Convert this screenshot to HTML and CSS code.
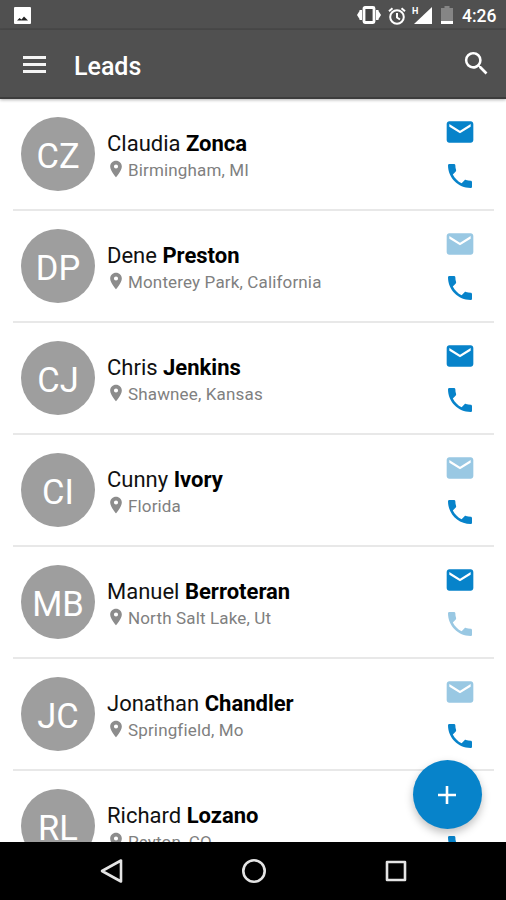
FILE: index.html
```html
<!DOCTYPE html>
<html lang="en">
<head>
    <meta charset="UTF-8">
    <meta name="viewport" content="width=device-width, initial-scale=1.0">
    <title>Leads</title>
    <link rel="stylesheet" href="styles.css">
</head>
<body>
    <!-- Shared icons -->
    <svg class="icon-defs">
        <symbol id="mail" viewBox="0 0 24 24"><path d="M20 4H4c-1.1 0-1.99.9-1.99 2L2 18c0 1.1.9 2 2 2h16c1.1 0 2-.9 2-2V6c0-1.1-.9-2-2-2zm0 4l-8 5-8-5V6l8 5 8-5v2z"/></symbol>
        <symbol id="phone" viewBox="0 0 24 24"><path d="M6.62 10.79c1.44 2.83 3.76 5.14 6.59 6.59l2.2-2.2c.27-.27.67-.36 1.02-.24 1.12.37 2.33.57 3.57.57.55 0 1 .45 1 1V20c0 .55-.45 1-1 1-9.39 0-17-7.61-17-17 0-.55.45-1 1-1h3.5c.55 0 1 .45 1 1 0 1.25.2 2.45.57 3.57.11.35.03.74-.25 1.02l-2.2 2.2z"/></symbol>
        <symbol id="pin" viewBox="0 0 24 24"><path d="M12 2C8.13 2 5 5.13 5 9c0 5.25 7 13 7 13s7-7.75 7-13c0-3.87-3.13-7-7-7zm0 9.5a2.5 2.5 0 0 1 0-5 2.5 2.5 0 0 1 0 5z"/></symbol>
    </svg>

    <div class="phone">
        <div class="status-bar">
            <svg class="status-image" viewBox="0 0 17 17"><rect width="17" height="17" rx="1" fill="#fff"/><path d="M3 13.500l2.500-2.500 2 1.500 2.500-3 4 4z" fill="#222"/></svg>
            <div class="status-icons">
                <svg class="status-vibrate" viewBox="0 0 24 18"><path d="M0 9l2.500-4v8zM24 9l-2.500-4v8zM2.500 4h2.500v10H2.500zM19 4h2.500v10H19z" fill="#fff"/><rect x="7" y="1.500" width="10" height="15" rx="1" fill="#444" stroke="#fff" stroke-width="2.800"/></svg>
                <svg class="status-alarm" viewBox="0 0 18 18"><circle cx="9" cy="10" r="6.800"/><path d="M9 6v4.500l3 2M1 4.200L4.500 1.200M17 4.200L13.500 1.200"/></svg>
                <div class="signal">
                    <span class="signal-type">H</span>
                    <svg viewBox="0 0 18 17"><path d="M18 0v17H0z" fill="#fff"/></svg>
                </div>
                <svg class="status-battery" viewBox="0 0 12 18"><path d="M3.500 0h5v2H12v13H0V2h3.500z" fill="#858585"/><path d="M0 15h12v3H0z" fill="#fff"/></svg>
                <span class="clock">4:26</span>
            </div>
        </div>

        <header class="app-bar">
            <div class="menu-btn"><span></span><span></span><span></span></div>
            <h1>Leads</h1>
            <svg class="search" viewBox="0 0 24 24"><path d="M15.500 14h-.79l-.28-.27A6.471 6.471 0 0 0 16 9.500 6.500 6.500 0 1 0 9.500 16c1.610 0 3.090-.59 4.230-1.570l.27.28v.79l5 4.990L20.490 19l-4.990-5zm-6 0C7.010 14 5 11.990 5 9.500S7.010 5 9.500 5 14 7.010 14 9.500 11.990 14 9.500 14z"/></svg>
        </header>

        <main class="leads">
            <div class="lead">
                <div class="avatar">CZ</div>
                <div class="info">
                    <p class="name">Claudia <b>Zonca</b></p>
                    <p class="place"><svg><use href="#pin"/></svg>Birmingham, MI</p>
                </div>
                <div class="actions">
                    <svg><use href="#mail"/></svg>
                    <svg><use href="#phone"/></svg>
                </div>
            </div>
            <div class="lead">
                <div class="avatar">DP</div>
                <div class="info">
                    <p class="name">Dene <b>Preston</b></p>
                    <p class="place"><svg><use href="#pin"/></svg>Monterey Park, California</p>
                </div>
                <div class="actions">
                    <svg class="off"><use href="#mail"/></svg>
                    <svg><use href="#phone"/></svg>
                </div>
            </div>
            <div class="lead">
                <div class="avatar">CJ</div>
                <div class="info">
                    <p class="name">Chris <b>Jenkins</b></p>
                    <p class="place"><svg><use href="#pin"/></svg>Shawnee, Kansas</p>
                </div>
                <div class="actions">
                    <svg><use href="#mail"/></svg>
                    <svg><use href="#phone"/></svg>
                </div>
            </div>
            <div class="lead">
                <div class="avatar">CI</div>
                <div class="info">
                    <p class="name">Cunny <b>Ivory</b></p>
                    <p class="place"><svg><use href="#pin"/></svg>Florida</p>
                </div>
                <div class="actions">
                    <svg class="off"><use href="#mail"/></svg>
                    <svg><use href="#phone"/></svg>
                </div>
            </div>
            <div class="lead">
                <div class="avatar">MB</div>
                <div class="info">
                    <p class="name">Manuel <b>Berroteran</b></p>
                    <p class="place"><svg><use href="#pin"/></svg>North Salt Lake, Ut</p>
                </div>
                <div class="actions">
                    <svg><use href="#mail"/></svg>
                    <svg class="off"><use href="#phone"/></svg>
                </div>
            </div>
            <div class="lead">
                <div class="avatar">JC</div>
                <div class="info">
                    <p class="name">Jonathan <b>Chandler</b></p>
                    <p class="place"><svg><use href="#pin"/></svg>Springfield, Mo</p>
                </div>
                <div class="actions">
                    <svg class="off"><use href="#mail"/></svg>
                    <svg><use href="#phone"/></svg>
                </div>
            </div>
            <div class="lead">
                <div class="avatar">RL</div>
                <div class="info">
                    <p class="name">Richard <b>Lozano</b></p>
                    <p class="place"><svg><use href="#pin"/></svg>Peyton, CO</p>
                </div>
                <div class="actions">
                    <svg><use href="#mail"/></svg>
                    <svg><use href="#phone"/></svg>
                </div>
            </div>
        </main>

        <button class="add-btn" aria-label="Add lead">
            <svg viewBox="0 0 18 18"><path d="M9 0v18M0 9h18"/></svg>
        </button>

        <nav class="nav-bar">
            <svg viewBox="0 0 26 26"><path d="M22 2.500v21L3 13z"/></svg>
            <svg viewBox="0 0 26 26"><circle cx="13" cy="13" r="10.700"/></svg>
            <svg viewBox="0 0 26 26"><rect x="4" y="4" width="18" height="18"/></svg>
        </nav>
    </div>
</body>
</html>
```
FILE: styles.css
```css
* {
    box-sizing: border-box;
}

body {
    margin: 0;
    font-family: Roboto, sans-serif;
    background: #fff;
    color: #111;
}

h1, p {
    margin: 0;
}

svg {
    display: block;
    flex-shrink: 0;
}

.icon-defs {
    display: none;
}

.phone {
    position: relative;
    display: flex;
    flex-direction: column;
    height: 900px;
    overflow: hidden;
}

/* Status bar */
.status-bar {
    display: flex;
    justify-content: space-between;
    align-items: flex-start;
    height: 30px;
    padding: 6px 10px 0 14px;
    background: #505050;
    border-bottom: 2px solid #4a4a4a;
    color: #fff;
    flex-shrink: 0;
}

.status-image {
    width: 17px;
    height: 17px;
    margin-top: 1px;
}

.status-icons {
    display: flex;
    height: 18px;
}

.status-vibrate {
    width: 24px;
    height: 18px;
}

.status-alarm {
    width: 18px;
    height: 18px;
    margin: 1px 0 0 7px;
    fill: none;
    stroke: #fff;
    stroke-width: 2;
}

.signal {
    position: relative;
    width: 20px;
    margin-left: 6px;
}

.signal svg {
    width: 18px;
    height: 17px;
    margin: 1px 0 0 2px;
}

.signal-type {
    position: absolute;
    left: 0;
    top: 0;
    font-size: 9px;
    line-height: 10px;
    font-weight: 700;
}

.status-battery {
    width: 12px;
    height: 18px;
    margin-left: 9px;
}

.clock {
    width: 34px;
    margin-left: 9px;
    font-size: 17.5px;
    line-height: 20px;
    font-weight: 500;
    white-space: nowrap;
}

/* App bar */
.app-bar {
    display: flex;
    align-items: center;
    height: 69px;
    padding: 0 14px 0 23px;
    background: #505050;
    border-bottom: 2px solid #3c3c3c;
    box-shadow: 0 1px 3px rgba(0, 0, 0, 0.3);
    color: #fff;
    flex-shrink: 0;
    z-index: 1;
}

.menu-btn {
    display: flex;
    flex-direction: column;
    gap: 4px;
    width: 23px;
    margin-top: 2px;
}

.menu-btn span {
    height: 3px;
    background: #f4f4f4;
}

.app-bar h1 {
    margin: 5px 0 0 28px;
    font-size: 25px;
    font-weight: 500;
}

.search {
    width: 31px;
    height: 31px;
    margin-left: auto;
    fill: #fff;
}

/* Leads list */
.leads {
    flex: 1;
    min-height: 0;
    overflow: hidden;
    padding: 0 12px 0 13px;
}

.lead {
    display: flex;
    height: 112px;
    padding: 18px 18px 0 8px;
    border-bottom: 2px solid #e8e8e8;
}

.avatar {
    display: flex;
    align-items: center;
    justify-content: center;
    width: 74px;
    height: 74px;
    padding-top: 4px;
    border-radius: 50%;
    background: #9e9e9e;
    color: #fff;
    font-size: 34.5px;
}

.info {
    flex: 1;
    margin-left: 12px;
    padding-top: 14px;
}

.name {
    font-size: 22px;
    line-height: 26px;
}

.name b {
    font-weight: 700;
    color: #000;
}

.place {
    display: flex;
    align-items: center;
    gap: 2px;
    font-size: 17px;
    line-height: 26px;
    letter-spacing: 0.15px;
    color: #808080;
}

.place svg {
    width: 20px;
    height: 20px;
    margin: -2px 0 0 -1px;
    fill: #8c8c8c;
}

.actions {
    display: flex;
    flex-direction: column;
    gap: 12px;
    margin-top: -1px;
}

.actions svg {
    width: 32px;
    height: 32px;
    fill: #0783ca;
}

.actions .off {
    fill: #99c8e3;
}

/* Floating add button */
.add-btn {
    position: absolute;
    right: 24px;
    bottom: 71px;
    display: flex;
    align-items: center;
    justify-content: center;
    width: 69px;
    height: 69px;
    padding: 0 1px 0 0;
    border: none;
    border-radius: 50%;
    background: #0783ca;
    box-shadow: 0 4px 8px rgba(0, 0, 0, 0.25);
}

.add-btn svg {
    width: 18px;
    height: 18px;
    stroke: #fff;
    stroke-width: 2.6;
}

/* Android navigation */
.nav-bar {
    display: flex;
    justify-content: space-between;
    align-items: center;
    height: 58px;
    padding: 0 97px 0 99px;
    background: #000;
    flex-shrink: 0;
    z-index: 1;
}

.nav-bar svg {
    width: 26px;
    height: 26px;
    fill: none;
    stroke: #e4e4e4;
    stroke-width: 2.6;
    stroke-linejoin: round;
}
```
